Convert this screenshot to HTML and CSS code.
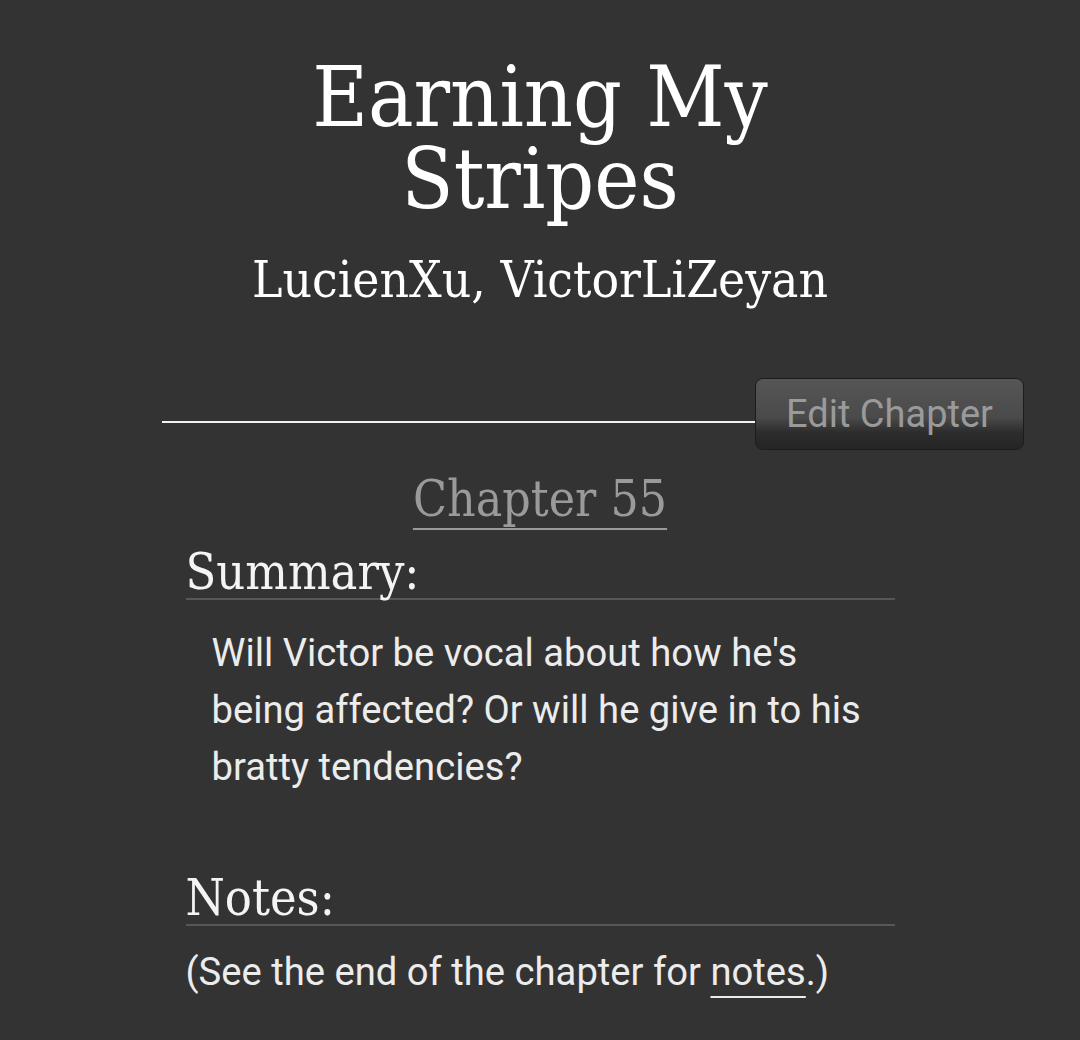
FILE: index.html
```html
<!DOCTYPE html>
<html lang="en">
<head>
    <meta charset="UTF-8">
    <meta name="viewport" content="width=device-width, initial-scale=1.0">
    <title>Earning My Stripes - Chapter 55</title>
    <link rel="stylesheet" href="styles.css">
</head>
<body>
    <div class="preface">
        <h2 class="title">Earning My Stripes</h2>
        <h3 class="byline">LucienXu, VictorLiZeyan</h3>
    </div>

    <div class="chapter-bar">
        <span class="chapter-rule"></span>
        <a class="button" href="#">Edit Chapter</a>
    </div>

    <div class="chapter-preface">
        <h3 class="chapter-title"><a href="#">Chapter 55</a></h3>

        <div class="summary module">
            <h3 class="heading">Summary:</h3>
            <blockquote class="userstuff">
                <p>Will Victor be vocal about how he's being affected? Or will he give in to his bratty tendencies?</p>
            </blockquote>
        </div>

        <div class="notes module">
            <h3 class="heading">Notes:</h3>
            <p class="jump">(See the end of the chapter for <a href="#">notes</a>.)</p>
        </div>
    </div>
</body>
</html>
```

FILE: styles.css
```css
* {
    margin: 0;
    padding: 0;
    box-sizing: border-box;
}

body {
    background-color: #333333;
    color: #ececec;
    font-family: Roboto, 'Liberation Sans', sans-serif;
    padding-top: 56px;
}

a {
    color: inherit;
}

/* work title + authors */
.preface {
    text-align: center;
    font-family: 'DejaVu Serif', serif;
    font-stretch: condensed;
    color: #ffffff;
}

.title {
    max-width: 620px;
    margin: 0 auto;
    font-size: 85px;
    line-height: 82px;
    font-weight: normal;
}

.byline {
    margin-top: 30px;
    font-size: 51px;
    line-height: 60px;
    font-weight: normal;
}

/* rule with the edit button on the right */
.chapter-bar {
    display: flex;
    margin-top: 68px;
    padding: 0 56px 0 162px;
}

.chapter-rule {
    flex: 1;
    align-self: flex-end;
    height: 2px;
    margin-bottom: 27px;
    background-color: #f2f2f2;
}

.button {
    display: inline-block;
    height: 72px;
    padding: 0 30px;
    line-height: 70px;
    font-size: 38px;
    color: #9a9a9a;
    text-decoration: none;
    border: 1px solid #1c1c1c;
    border-radius: 8px;
    background: linear-gradient(#565656 0%, #4a4a4a 55%, #2d2d2d 76%, #252525 100%);
}

/* chapter heading block */
.chapter-preface {
    width: 709px;
    margin: 0 auto;
}

.chapter-title {
    margin-top: 18px;
    text-align: center;
    font-family: 'DejaVu Serif', serif;
    font-stretch: condensed;
    font-weight: normal;
    font-size: 49.5px;
    line-height: 62px;
}

.chapter-title a {
    color: #9a9a9a;
    text-decoration: underline;
    text-decoration-thickness: 2px;
    text-underline-offset: 12px;
    text-decoration-skip-ink: none;
}

.heading {
    font-family: 'DejaVu Serif', serif;
    font-stretch: condensed;
    font-weight: normal;
    font-size: 50px;
    line-height: 52px;
    color: #f4f4f4;
    border-bottom: 2px solid #575757;
}

.summary .heading {
    margin-top: 16px;
}

.userstuff {
    margin: 25px 26px 0 26px;
    font-size: 38.2px;
    line-height: 57px;
}

.notes .heading {
    margin-top: 76px;
}

.jump {
    margin-top: 18px;
    font-size: 38.2px;
    line-height: 57px;
}

.jump a {
    text-decoration-thickness: 2px;
    text-underline-offset: 11px;
}
```
